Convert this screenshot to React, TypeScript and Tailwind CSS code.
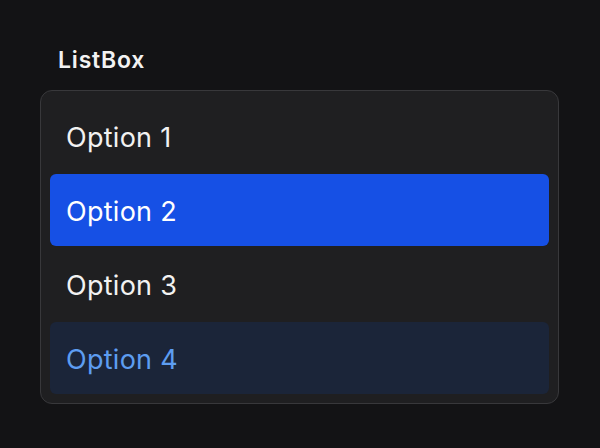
import { useState } from 'react';

const OPTIONS = ['Option 1', 'Option 2', 'Option 3', 'Option 4'];

export default function App() {
  const [selected, setSelected] = useState(1);
  const focused = 3;

  return (
    <div
      className="min-h-[448px] w-full bg-[#131315] px-10 pt-[43px]"
      style={{ fontFamily: 'Inter, "Noto Sans", sans-serif' }}
    >
      <h2 className="pl-[18px] text-[23px] font-semibold leading-[34px] tracking-[0.035em] text-[#f2f2f2]">
        ListBox
      </h2>
      <ul className="mt-[13px] flex w-[519px] flex-col gap-[2px] rounded-[12px] border border-[#38383b] bg-[#1f1f21] p-[9px]">
        {OPTIONS.map((opt, i) => {
          const isSel = i === selected;
          const isFocus = i === focused;
          return (
            <li
              key={opt}
              onClick={() => setSelected(i)}
              className={
                'flex h-[72px] cursor-pointer items-center rounded-[6px] px-4 pt-[5px] text-[27px] tracking-[0.01em] ' +
                (isSel
                  ? 'bg-[#1650e5] text-white'
                  : isFocus
                  ? 'bg-[#1b2539] text-[#5d9df1]'
                  : 'text-[#f2f2f2]')
              }
            >
              {opt}
            </li>
          );
        })}
      </ul>
    </div>
  );
}
